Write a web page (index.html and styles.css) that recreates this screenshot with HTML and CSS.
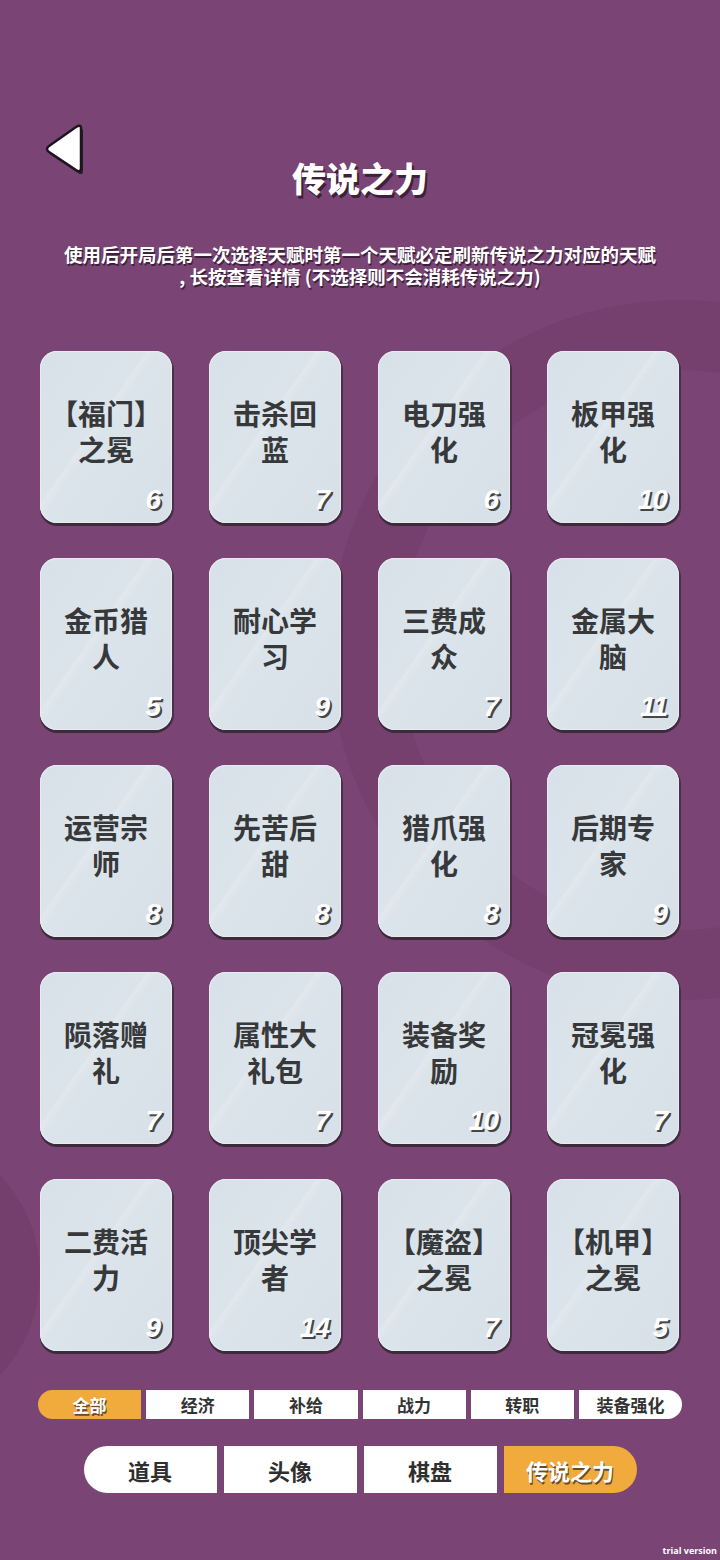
FILE: index.html
```html
<!DOCTYPE html>
<html lang="zh-CN">
<head>
    <meta charset="UTF-8">
    <meta name="viewport" content="width=device-width, initial-scale=1.0">
    <title>传说之力</title>
    <link rel="stylesheet" href="styles.css">
</head>
<body>
    <div class="page">
        <div class="bg-ring"></div>
        <div class="bg-disc"></div>

        <header class="top">
            <button class="back" aria-label="返回">
                <svg width="44" height="52" viewBox="0 0 44 52">
                    <path d="M38 6 L38 46 Q38 51 33 48 L6 30 Q2 27 6 24 L33 5 Q38 2 38 6 Z" fill="#2a1c2a" transform="translate(2 3)"/>
                    <path d="M38 6 L38 46 Q38 51 33 48 L6 30 Q2 27 6 24 L33 5 Q38 2 38 6 Z" fill="#ffffff" stroke="#1e161e" stroke-width="2.5" stroke-linejoin="round"/>
                </svg>
            </button>
            <h1 class="title">传说之力</h1>
        </header>

        <p class="desc">使用后开局后第一次选择天赋时第一个天赋必定刷新传说之力对应的天赋<br>, 长按查看详情 (不选择则不会消耗传说之力)</p>

        <div class="cards">
            <div class="card"><div class="name">【福门】<br>之冕</div><div class="num">6</div></div>
            <div class="card"><div class="name">击杀回<br>蓝</div><div class="num">7</div></div>
            <div class="card"><div class="name">电刀强<br>化</div><div class="num">6</div></div>
            <div class="card"><div class="name">板甲强<br>化</div><div class="num">10</div></div>

            <div class="card"><div class="name">金币猎<br>人</div><div class="num">5</div></div>
            <div class="card"><div class="name">耐心学<br>习</div><div class="num">9</div></div>
            <div class="card"><div class="name">三费成<br>众</div><div class="num">7</div></div>
            <div class="card"><div class="name">金属大<br>脑</div><div class="num">11</div></div>

            <div class="card"><div class="name">运营宗<br>师</div><div class="num">8</div></div>
            <div class="card"><div class="name">先苦后<br>甜</div><div class="num">8</div></div>
            <div class="card"><div class="name">猎爪强<br>化</div><div class="num">8</div></div>
            <div class="card"><div class="name">后期专<br>家</div><div class="num">9</div></div>

            <div class="card"><div class="name">陨落赠<br>礼</div><div class="num">7</div></div>
            <div class="card"><div class="name">属性大<br>礼包</div><div class="num">7</div></div>
            <div class="card"><div class="name">装备奖<br>励</div><div class="num">10</div></div>
            <div class="card"><div class="name">冠冕强<br>化</div><div class="num">7</div></div>

            <div class="card"><div class="name">二费活<br>力</div><div class="num">9</div></div>
            <div class="card"><div class="name">顶尖学<br>者</div><div class="num">14</div></div>
            <div class="card"><div class="name">【魔盗】<br>之冕</div><div class="num">7</div></div>
            <div class="card"><div class="name">【机甲】<br>之冕</div><div class="num">5</div></div>
        </div>

        <div class="filters">
            <button class="filter active">全部</button>
            <button class="filter">经济</button>
            <button class="filter">补给</button>
            <button class="filter">战力</button>
            <button class="filter">转职</button>
            <button class="filter">装备强化</button>
        </div>

        <nav class="tabs">
            <button class="tab">道具</button>
            <button class="tab">头像</button>
            <button class="tab">棋盘</button>
            <button class="tab active">传说之力</button>
        </nav>

        <div class="trial">trial version</div>
    </div>
</body>
</html>
```
FILE: styles.css
```css
body {
    margin: 0;
    background-color: #7a4474;
    font-family: "Noto Sans CJK SC", "Noto Sans", sans-serif;
}
.page {
    position: relative;
    width: 720px;
    height: 1560px;
    overflow: hidden;
}
/* faint background shapes */
.bg-ring {
    position: absolute;
    left: 330px;
    top: 300px;
    width: 560px;
    height: 560px;
    border-radius: 50%;
    border: 70px solid #6f3b69;
    opacity: 0.45;
    pointer-events: none;
}
.bg-disc {
    position: absolute;
    left: -250px;
    top: 1130px;
    width: 290px;
    height: 290px;
    border-radius: 50%;
    background: #6f3b69;
    opacity: 0.6;
    pointer-events: none;
}
.top {
    position: relative;
    display: grid;
    grid-template-columns: 80px 1fr 80px;
    padding-top: 122px;
}
.back {
    background: none;
    border: none;
    padding: 0;
    margin-left: 42px;
    width: 46px;
    height: 54px;
    cursor: pointer;
}
.title {
    margin: 37px 0 0;
    text-align: center;
    font-size: 34px;
    line-height: 38px;
    font-weight: 900;
    color: #ffffff;
    text-shadow: 2px 3px 0 #3b2139;
}
.desc {
    position: relative;
    margin: 46px 0 0;
    text-align: center;
    font-size: 18.5px;
    line-height: 22px;
    font-weight: 700;
    color: #ffffff;
    text-shadow: 1px 2px 0 #3b2139;
}
.cards {
    position: relative;
    display: grid;
    grid-template-columns: repeat(4, 132px);
    grid-auto-rows: 172px;
    column-gap: 37px;
    row-gap: 35px;
    margin: 64px 0 0 40px;
}
.card {
    display: flex;
    flex-direction: column;
    align-items: center;
    border-radius: 17px;
    background: linear-gradient(125deg, #d8e1e9 0%, #dce4eb 42%, #e1e8ee 43%, #dce4eb 47%, #d7e0e8 100%);
    box-shadow: 0 3px 0 #3d2a3b, 2px 2px 0 #4a3047, inset 0 0 0 1px #e6ecf1;
}
.name {
    margin-top: 44px;
    text-align: center;
    font-size: 28px;
    line-height: 36px;
    font-weight: 700;
    color: #36383a;
}
.num {
    margin-top: auto;
    align-self: flex-end;
    margin-right: 12px;
    margin-bottom: 9px;
    font-family: "Liberation Sans", "DejaVu Sans", sans-serif;
    font-size: 28px;
    line-height: 28px;
    font-weight: 700;
    font-style: italic;
    letter-spacing: -1px;
    color: #ffffff;
    text-shadow: 2px 2px 0 #464646;
}
.filters {
    position: relative;
    display: flex;
    gap: 5px;
    width: 644px;
    margin: 39px 0 0 38px;
}
.filter {
    flex: 1;
    height: 29px;
    border: none;
    padding: 0;
    background: #ffffff;
    font-family: inherit;
    font-size: 17px;
    font-weight: 700;
    color: #333333;
}
.filter:first-child {
    border-radius: 15px 0 0 15px;
}
.filter:last-child {
    border-radius: 0 15px 15px 0;
}
.filter.active,
.tab.active {
    background: #f1aa3c;
    color: #ffffff;
    text-shadow: 1px 2px 0 #6b4a2a;
}
.tabs {
    position: relative;
    display: flex;
    justify-content: center;
    gap: 7px;
    margin-top: 27px;
}
.tab {
    width: 133px;
    height: 47px;
    border: none;
    padding: 0;
    background: #ffffff;
    font-family: inherit;
    font-size: 22px;
    font-weight: 700;
    color: #2f2f2f;
}
.tab:first-child {
    border-radius: 24px 0 0 24px;
}
.tab:last-child {
    border-radius: 0 24px 24px 0;
}
.trial {
    position: relative;
    margin-top: 51px;
    padding-right: 3px;
    text-align: right;
    font-family: "Open Sans", sans-serif;
    font-size: 9px;
    font-weight: 700;
    color: #ffffff;
}
```
